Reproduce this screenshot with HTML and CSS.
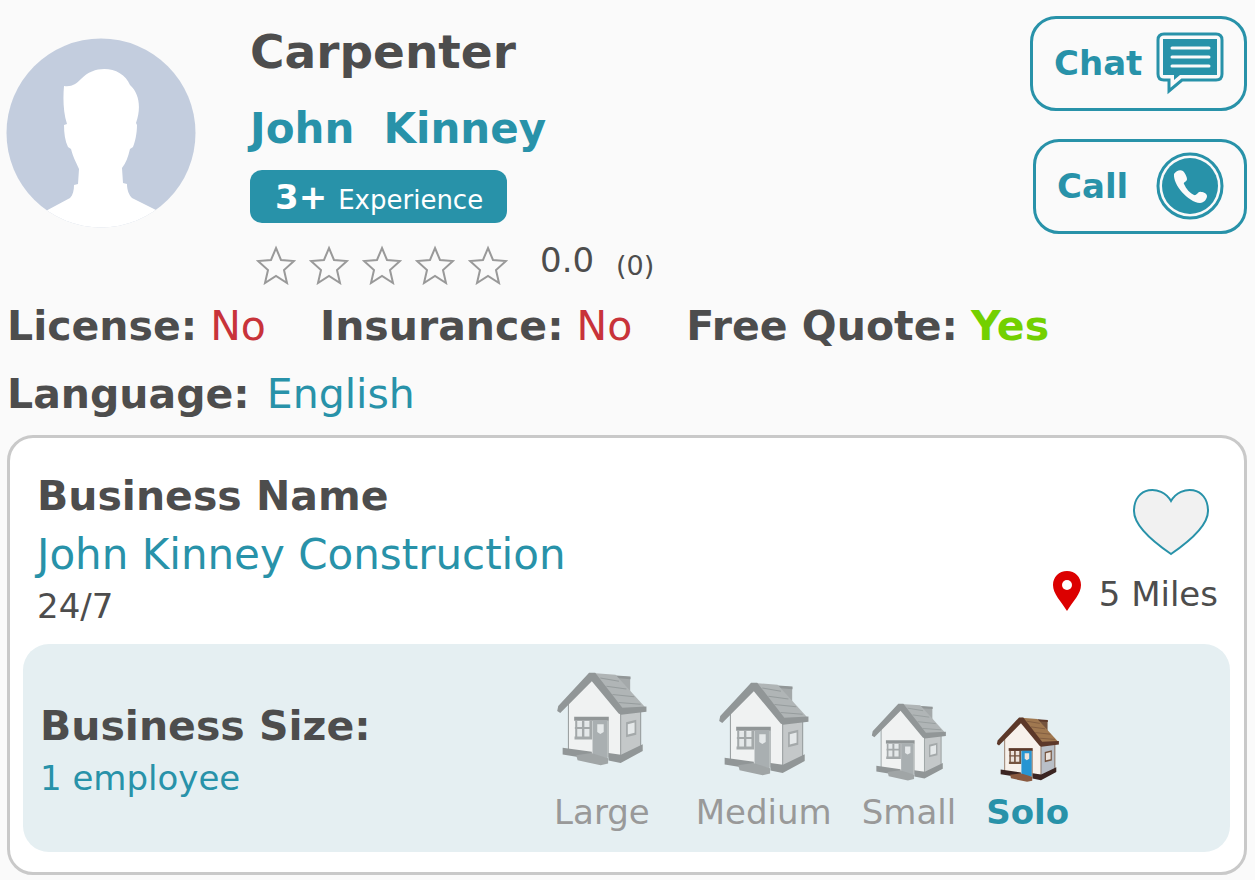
FILE: index.html
```html
<!DOCTYPE html>
<html lang="en">
<head>
  <meta charset="UTF-8">
  <meta name="viewport" content="width=device-width, initial-scale=1">
  <title>Carpenter - John Kinney</title>
  <link rel="stylesheet" href="styles.css">
</head>
<body>
  <svg class="sprite" aria-hidden="true">
    <symbol id="star" viewBox="0 0 40 40">
      <path d="M20 3l5 12 13 1-10 9 3 13-11-7-11 7 3-13L2 16l13-1z" fill="none" stroke="#999" stroke-width="2"/>
    </symbol>
    <symbol id="house" viewBox="0 0 270 280">
      <path class="side" d="M188 105l62-8v128l-62 30z"/>
      <path class="wall" d="M36 90L106 20l84 98v137L36 236z"/>
      <path class="edge" d="M36 90v145M190 115v138M249 110v115" fill="none"/>
      <path class="base" d="M19 223l86 12v22l-86-14zM154 239l37 5 64-31v20l-65 35-36-7z"/>
      <path class="brick" d="M178 12l40 3v48l-40-10z"/>
      <path class="trim" d="M176 10l43 3v8l-43-3z"/>
      <path class="roof" d="M107 3l68 5 90 99-74 6z"/>
      <path class="tile" d="M130 18l55 9M148 42l59 8M166 66l64 7M184 90l65 5" fill="none"/>
      <path class="trim" d="M97 2h18l80 103 71-3v15l-75 9-7-4L105 27 12 121l-9-6 3-15z"/>
      <path class="trim" d="M53 132h102v12H53z"/>
      <path class="pane" d="M58 146h42v45H58z"/>
      <path class="brick" d="M56 144h6v48h-6zM76 144h7v48h-7zM98 144h8v52h-8zM55 162h48v6H55zM54 190h52v9H54z"/>
      <path class="door" d="M107 143h44v111l-44-7z"/>
      <path class="pane" d="M121 154h19v23l-10 6-9-6z"/>
      <path class="edge" d="M153 143v109" fill="none"/>
      <path class="brick" d="M206 148l30-7v44l-30 7z"/>
      <path class="pane" d="M211 154l20-5v30l-20 5z"/>
      <path class="step" d="M59 245l44-6 50 15v16l-22 5-68-15z"/>
    </symbol>
  </svg>

  <div class="profile">
    <div class="header">
      <svg class="avatar" viewBox="0 0 190 190" role="img" aria-label="Profile photo">
        <clipPath id="round"><circle cx="95" cy="95" r="94.5"/></clipPath>
        <g clip-path="url(#round)">
          <path fill="#c3cdde" d="M0 0h190v190H0z"/>
          <path fill="#fff" d="M58 48c8 1 12-2 17-7 15-16 42-12 49 6 10 9 11 24 6 38l1 2c0 9-2 17-4 22l-3 2c-2 8-4 14-8 19l1 15 4 1c0 6 2 11 5 14l26 13v22H36v-20l28-15c3-3 4-8 4-13l4-1 1-15c-3-7-6-12-8-20l-3-2c-3-6-4-14-4-22l3-1c-4-12-4-27-3-38z"/>
        </g>
      </svg>

      <div class="about">
        <h1>Carpenter</h1>
        <h2>John&nbsp; Kinney</h2>
        <div class="badge"><strong>3+</strong> Experience</div>
        <div class="rating">
          <div class="stars" role="img" aria-label="0 out of 5 stars">
            <svg><use href="#star"/></svg>
            <svg><use href="#star"/></svg>
            <svg><use href="#star"/></svg>
            <svg><use href="#star"/></svg>
            <svg><use href="#star"/></svg>
          </div>
          <span class="score">0.0</span>
          <span class="count">(0)</span>
        </div>
      </div>

      <div class="actions">
        <button type="button" class="chat">Chat
          <svg viewBox="0 0 68 68" aria-hidden="true">
            <path d="M8 5h52q6 0 6 6v34q0 6-6 6H26L13 62V51H8q-6 0-6-6V11q0-6 6-6z" fill="#fafafa" stroke="#2892a9" stroke-width="3"/>
            <path d="M7 10h54v36H24l-6 5v-5H7z" fill="#2892a9"/>
            <path d="M16 19h37M16 28h37M16 37h37" stroke="#fafafa" stroke-width="3" stroke-linecap="round"/>
          </svg>
        </button>
        <button type="button" class="call">Call
          <svg viewBox="0 0 68 68" aria-hidden="true">
            <circle cx="34" cy="34" r="32" fill="#fafafa" stroke="#2892a9" stroke-width="3"/>
            <circle cx="34" cy="34" r="28" fill="#2892a9"/>
            <path d="M18 22c2-3 6-5 9-3 2 2 4 6 4 8 0 3-4 3-3 5 2 5 6 9 10 11 3 1 4-4 7-3 3 0 6 2 6 4 0 3-3 7-7 7-12-1-27-18-26-29z" fill="#fafafa"/>
          </svg>
        </button>
      </div>
    </div>

    <div class="facts">
      <div><b>License:</b> <span class="no">No</span></div>
      <div><b>Insurance:</b> <span class="no">No</span></div>
      <div><b>Free Quote:</b> <b class="yes">Yes</b></div>
    </div>
    <div class="language"><b>Language:</b> <span>English</span></div>

    <div class="card">
      <div class="business">
        <div class="business-info">
          <h3>Business Name</h3>
          <p class="business-name">John Kinney Construction</p>
          <p class="hours">24/7</p>
        </div>
        <div class="place">
          <button type="button" class="like" aria-label="Add to favorites">
            <svg viewBox="0 0 78 68">
              <path d="M39 13C49-4 76-2 76 23c0 15-18 30-37 43C20 53 2 38 2 23 2-2 29-4 39 13z" fill="#f1f1f1" stroke="#2892a9" stroke-width="2"/>
            </svg>
          </button>
          <div class="distance">
            <svg viewBox="0 0 30 42" aria-hidden="true">
              <path d="M15 1C7 1 1 7 1 15c0 9 8 16 14 26 6-10 14-17 14-26C29 7 23 1 15 1z" fill="#dc0000"/>
              <circle cx="15" cy="15" r="5" fill="#fff"/>
            </svg>
            5 Miles
          </div>
        </div>
      </div>

      <div class="size">
        <div class="size-info">
          <h3>Business Size:</h3>
          <p>1 employee</p>
        </div>
        <ul class="sizes">
          <li class="large"><svg class="house"><use href="#house"/></svg>Large</li>
          <li class="medium"><svg class="house"><use href="#house"/></svg>Medium</li>
          <li class="small"><svg class="house"><use href="#house"/></svg>Small</li>
          <li class="solo"><svg class="house"><use href="#house"/></svg>Solo</li>
        </ul>
      </div>
    </div>
  </div>
</body>
</html>
```
FILE: styles.css
```css
* { box-sizing: border-box; }
body { margin: 0; background: #fafafa; color: #4d4d4d; font-family: Verdana, "DejaVu Sans", sans-serif; font-size: 34px; line-height: 40px; }
h1, h2, h3, p, ul { margin: 0; padding: 0; }
button { font: inherit; cursor: pointer; }
svg { display: block; flex: none; }
.sprite { position: absolute; width: 0; height: 0; }

.profile { padding: 16px 8px 4px 7px; }
.header { display: flex; align-items: flex-start; }
.avatar { width: 190px; height: 190px; margin: 22px 54px 0 -1px; }
.about { flex: 1; }
h1 { font-size: 47px; line-height: 72px; }
h2 { color: #2892a9; font-size: 42px; line-height: 82px; }
.badge { display: flex; align-items: baseline; gap: 11px; width: fit-content; padding: 8px 24px 4px 25px; border-radius: 12px; background: #2892a9; color: #fff; font-size: 26px; line-height: 38px; }
.badge strong { font-size: 34px; }
.rating { display: flex; align-items: center; margin-top: 11px; }
.stars { display: flex; gap: 13px; margin: 10px 32px 0 6px; }
.stars svg { width: 40px; height: 40px; }
.count { margin: 12px 0 0 22px; font-size: 27px; }

.actions { display: flex; flex-direction: column; align-items: flex-end; gap: 28px; }
.actions button { display: flex; align-items: center; justify-content: space-between; height: 95px; padding: 0 20px 2px 21px; border: 3px solid #2892a9; border-radius: 26px; background: #fafafa; color: #2892a9; font-weight: bold; }
.actions svg { width: 68px; height: 68px; }
.chat { width: 217px; }
.call { width: 214px; }

.facts, .language { font-size: 41px; line-height: 68px; }
.facts { display: flex; gap: 54px; margin-top: 6px; white-space: nowrap; }
.no { color: #c8333a; }
.yes { color: #73d000; }
.language span { margin-left: 4px; color: #2892a9; }

.card { margin-top: 7px; padding: 28px 14px 20px 13px; border: 3px solid #c9c9c9; border-radius: 26px; background: #fff; }
.business { display: flex; justify-content: space-between; padding: 0 12px 0 14px; }
h3 { font-size: 41px; line-height: 60px; }
.business-name { color: #2892a9; font-size: 42px; line-height: 58px; }
.hours { line-height: 44px; }
.place { display: flex; flex-direction: column; align-items: flex-end; padding-top: 22px; }
.like { margin-right: 8px; padding: 0; border: 0; background: none; }
.like svg { width: 78px; height: 68px; }
.distance { display: flex; align-items: center; gap: 16px; margin-top: 14px; }
.distance svg { width: 32px; height: 42px; margin-bottom: 6px; }

.size { display: flex; align-items: flex-end; margin-top: 16px; padding: 28px 17px 20px; border-radius: 26px; background: #e5eff2; }
.size-info { width: 44%; padding-bottom: 32px; }
.size p { color: #2892a9; line-height: 44px; }
.sizes { display: flex; align-items: flex-end; gap: 30px; margin-left: -2px; list-style: none; color: #999; }
.sizes li { display: flex; flex-direction: column; align-items: center; }
.house { width: 92px; height: 95px; margin-bottom: 15px; }
.large { margin-right: 16px; }
.large .house { margin-bottom: 25px; }
.small .house { width: 76px; height: 79px; margin-bottom: 10px; }
.sizes .solo { color: #2892a9; font-weight: bold; }
.solo .house { width: 64px; height: 66px; margin-bottom: 9px; }

/* house colours, grey unless it is the current size */
.house { --wall: #f0f2f2; --side: #c4c8c9; --roof: #b0b5b6; --trim: #919697; --base: #919697; --line: #969c9d; --brick: #a4a9aa; --pane: #e4e8e9; --door: #a9afb1; --step: #a0a5a6; }
.solo .house { --wall: #f7f1eb; --side: #b9bfc7; --roof: #a07850; --trim: #5c3829; --base: #3b2522; --line: #77543c; --brick: #75543f; --pane: #ece3dc; --door: #2795d2; --step: #8a5a40; }
.wall { fill: var(--wall); }
.side { fill: var(--side); }
.roof { fill: var(--roof); }
.trim { fill: var(--trim); }
.base { fill: var(--base); }
.tile, .edge { stroke: var(--line); stroke-width: 3; }
.brick { fill: var(--brick); }
.pane { fill: var(--pane); }
.door { fill: var(--door); }
.step { fill: var(--step); }
```
